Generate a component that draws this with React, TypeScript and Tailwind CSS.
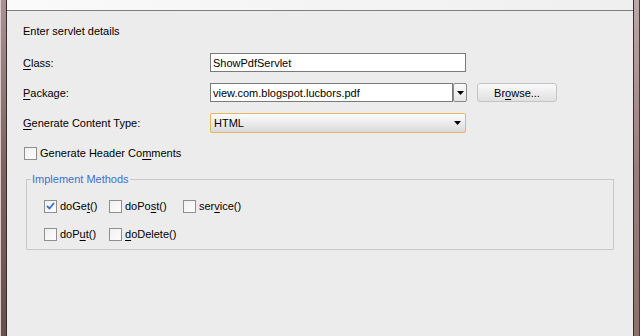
import React from 'react'

const font = { fontFamily: '"Liberation Sans", Arial, sans-serif' }

function U({ children }: { children: React.ReactNode }) {
  return <span className="underline decoration-1 underline-offset-[2px]">{children}</span>
}

function Check({ checked }: { checked?: boolean }) {
  return (
    <span className="flex h-[13px] w-[13px] shrink-0 items-center justify-center border border-[#8e8f8f] bg-gradient-to-br from-[#f0f0f0] to-[#fdfdfd]">
      {checked && (
        <svg width="9" height="8" viewBox="0 0 9 8">
          <path d="M1 4 L3.5 6.5 L8 1" fill="none" stroke="#3b6fc4" strokeWidth="1.8" />
        </svg>
      )}
    </span>
  )
}

function Arrow() {
  return (
    <svg width="7" height="4" viewBox="0 0 7 4">
      <path d="M0 0 H7 L3.5 4 Z" fill="#000" />
    </svg>
  )
}

function Method({ box, label, w }: { box?: boolean; label: React.ReactNode; w: string }) {
  return (
    <div className={`flex items-center gap-[3px] ${w}`}>
      <Check checked={box} />
      <span className="text-[11px] leading-[14px] text-black">{label}</span>
    </div>
  )
}

export default function App() {
  return (
    <div className="flex h-[336px] w-[640px] bg-[#ececec]" style={font}>
      {/* left window frame */}
      <div className="flex w-[7px] shrink-0">
        <div className="w-[1px] bg-[#d6cccc]" />
        <div className="w-[5px] bg-gradient-to-b from-[#a89292] via-[#7e625e] to-[#694f4c]" />
        <div className="w-[1px] bg-[#3a2c2c]" />
      </div>

      <div className="flex flex-1 flex-col">
        <div className="h-[11px] border-b border-[#7f7f7f] bg-gradient-to-r from-[#fafafa] to-[#efefef]" />

        <div className="flex flex-col pl-[16px] pr-[19px] text-[11px] leading-[14px] text-black">
          <div className="mt-[13px]">Enter servlet details</div>

          <div className="mt-[15px] flex h-[19px] items-center">
            <div className="w-[187px]"><U>C</U>lass:</div>
            <div className="flex h-[19px] w-[256px] items-center border border-[#7a7a7a] bg-white pl-[2px]">
              ShowPdfServlet
            </div>
          </div>

          <div className="mt-[11px] flex h-[19px] items-center">
            <div className="w-[187px]"><U>P</U>ackage:</div>
            <div className="flex h-[19px] w-[257px]">
              <div className="flex flex-1 items-center border border-[#7a7a7a] bg-white pl-[2px]">
                view.com.blogspot.lucbors.pdf
              </div>
              <div className="flex w-[14px] items-center justify-center rounded-[2px] border border-[#8a8a8a] bg-gradient-to-b from-[#fbfbfb] to-[#e6e6e6]">
                <Arrow />
              </div>
            </div>
            <div className="ml-[10px] flex h-[19px] w-[80px] items-center justify-center rounded-[3px] border border-[#c4c4c4] bg-gradient-to-b from-[#fafafa] to-[#e0e0e0]">
              Br<U>o</U>wse...
            </div>
          </div>

          <div className="mt-[11px] flex h-[20px] items-center">
            <div className="w-[187px]"><U>G</U>enerate Content Type:</div>
            <div className="flex h-[20px] w-[256px] items-center justify-between rounded-[2px] border border-[#e6b760] bg-gradient-to-b from-[#fdfdfd] via-[#ececec] to-[#dadada] pl-[3px] pr-[4px]">
              <span>HTML</span>
              <Arrow />
            </div>
          </div>

          <div className="mt-[13px] flex items-center gap-[3px] pl-[1px]">
            <Check />
            <span>Generate Header Co<U>m</U>ments</span>
          </div>

          <div className="relative ml-[3px] mt-[19px] h-[71px] w-[588px] border border-[#c9c9c9]">
            <span className="absolute -top-[8px] left-[4px] bg-[#ececec] px-[1px] text-[#3d6fd3]">
              Implement Methods
            </span>
            <div className="flex flex-col gap-[14px] pl-[17px] pt-[19px]">
              <div className="flex">
                <Method box w="w-[65px]" label={<>doGe<U>t</U>()</>} />
                <Method w="w-[74px]" label={<>doPo<U>s</U>t()</>} />
                <Method w="w-[80px]" label={<>ser<U>v</U>ice()</>} />
              </div>
              <div className="flex">
                <Method w="w-[65px]" label={<>doP<U>u</U>t()</>} />
                <Method w="w-[80px]" label={<><U>d</U>oDelete()</>} />
              </div>
            </div>
          </div>
        </div>
      </div>

      {/* right window frame */}
      <div className="flex w-[8px] shrink-0">
        <div className="w-[1px] bg-[#3a2c2c]" />
        <div className="w-[5px] bg-gradient-to-b from-[#bba8a8] via-[#9a7e7b] to-[#8c706c]" />
        <div className="w-[1px] bg-[#4a3838]" />
        <div className="w-[1px] bg-[#2a2020]" />
      </div>
    </div>
  )
}
